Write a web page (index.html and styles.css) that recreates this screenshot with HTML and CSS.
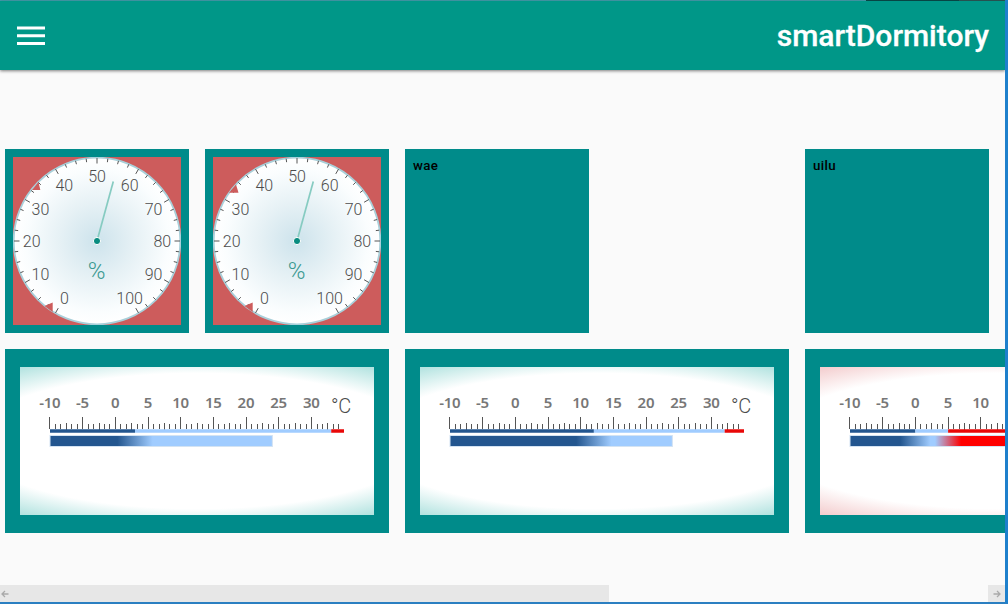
FILE: index.html
```html
<!DOCTYPE html>
<html lang="en">
<head>
<meta charset="utf-8">
<title>smartDormitory</title>
<link rel="stylesheet" href="styles.css">
</head>
<body>
<div class="window">
  <div class="window-top"><i class="top-a"></i><i class="top-b"></i><i class="top-c"></i></div>
  <header class="toolbar">
    <svg class="menu" width="28" height="20" viewBox="0 0 28 20"><path d="M0 2h28M0 9.700h28M0 17.500h28" stroke="#fff" stroke-width="3"/></svg>
    <h1 class="title">smartDormitory</h1>
  </header>
  <main class="board">
    <section class="tile"><svg class="dial" data-marker="19 33 27.3 33 25.5 25" viewBox="0 0 168 168"></svg></section>
    <section class="tile"><svg class="dial" data-marker="16 35.7 25.5 35.7 23 27.5" viewBox="0 0 168 168"></svg></section>
    <section class="tile label">wae</section>
    <section class="tile label last">uilu</section>
    <section class="tile wide"><svg class="thermo cool" data-low="3" data-high="33" data-value="24" viewBox="0 0 354 148"></svg></section>
    <section class="tile wide"><svg class="thermo cool" data-low="12" data-high="32" data-value="24" viewBox="0 0 354 148"></svg></section>
    <section class="tile wide"><svg class="thermo warm" data-low="0" data-high="5" data-value="24" data-visible="10" viewBox="0 0 354 148"></svg></section>
  </main>
  <div class="scrollbar">
    <div class="thumb"><svg width="10" height="10" viewBox="0 0 10 10"><path d="M8.500 5H2M5 2 2 5l3 3"/></svg></div>
    <div class="arrow"><svg width="10" height="10" viewBox="0 0 10 10"><path d="M1.500 5H8M5 2l3 3-3 3"/></svg></div>
  </div>
</div>
<script src="gauges.js"></script>
</body>
</html>
```
FILE: styles.css
```css
* { box-sizing: border-box; }
body { margin: 0; background: #fafafa; font-family: Roboto, sans-serif; overflow: hidden; }
.window { width: 1008px; height: 604px; display: flex; flex-direction: column; overflow: hidden; border-right: 3px solid #1e80cc; border-bottom: 2px solid #2b7fc1; }
.window-top { display: flex; height: 1px; flex: none; }
.top-a { width: 866px; background: #459fae; }
.top-b { width: 93px; background: #084c4b; }
.top-c { flex: 1; background: #2a5957; }
.toolbar { flex: none; height: 69px; padding: 0 16px 0 17px; display: flex; align-items: center; justify-content: space-between; background: #009788; box-shadow: 0 1px 3px rgba(0,0,0,.5); }
.title { margin: 0; font-size: 30px; line-height: 36px; font-weight: 500; color: #fff; -webkit-text-stroke: .3px #fff; }
.board { flex: 1; display: grid; grid-template-columns: repeat(6, 184px); grid-auto-rows: 184px; gap: 16px; padding: 79px 0 0 5px; overflow: hidden; }
.tile { background: #008b8a; padding: 8px; }
.wide { grid-column: span 2; padding: 18px 15px; }
.label { font-size: 13.300px; line-height: 17px; font-weight: 500; letter-spacing: .35px; color: #000; }
.last { grid-column: 5; }
.dial { display: block; width: 168px; height: 168px; background: #cd5c5c; }
.dial text { font-size: 16px; font-weight: 300; fill: #4c4c4c; text-anchor: middle; }
.dial .unit { font-size: 24px; fill: #3a9990; }
.thermo { display: block; width: 354px; height: 148px; }
.cool { background: radial-gradient(ellipse 305px 91px at center, #fff 74.500%, #b0e2df 100%); }
.warm { background: radial-gradient(ellipse 305px 91px at center, #fff 74.500%, #f3cccd 100%); }
.thermo text { font: 600 15px "Noto Sans", sans-serif; fill: #777; text-anchor: middle; letter-spacing: -.3px; }
.thermo .unit { font: 300 20px Roboto, sans-serif; fill: #4a4a4a; letter-spacing: -.3px; }
.scrollbar { flex: none; height: 17px; display: flex; justify-content: space-between; }
.scrollbar svg { fill: none; stroke: #aaa; stroke-width: 1.300; }
.thumb { width: 609px; background: #e7e7e7; display: flex; align-items: center; }
.arrow { width: 17px; background: #e7e7e7; display: flex; align-items: center; justify-content: center; }
```
FILE: gauges.js
```js
const DEG = Math.PI / 180;

document.querySelectorAll('.dial').forEach((svg, n) => {
  let s = `<defs><radialGradient id="face${n}"><stop offset="0" stop-color="#cde3ec"/><stop offset=".45" stop-color="#e6f1f5"/><stop offset=".85" stop-color="#fafdfe"/><stop offset="1" stop-color="#fff"/></radialGradient></defs>
    <circle cx="84" cy="84" r="83.300" fill="url(#face${n})" stroke="#a9d0da" stroke-width="1.800"/>`;
  for (let i = 0; i <= 40; i++) {
    const a = (-150 + i * 7.5) * DEG, x = Math.sin(a), y = -Math.cos(a);
    const major = i % 4 === 0, r1 = major ? 77.5 : 79.5, r2 = 83;
    s += `<path d="M${84 + x * r1} ${84 + y * r1}L${84 + x * r2} ${84 + y * r2}" stroke="#555" stroke-width="1"/>`;
    if (major) s += `<text x="${84 + x * 65.3}" y="${90.2 + y * 65.2}">${i * 2.5}</text>`;
  }
  s += `<polygon points="${svg.dataset.marker}" fill="#cd5c5c"/><polygon points="31.500 149 39.700 145.500 39.700 155" fill="#cd5c5c"/>
    <path d="M84 84 100.300 24.500" stroke="#86cbc1" stroke-width="1.700"/>
    <circle cx="84" cy="84" r="3.600" fill="#098c80" stroke="#fff"/>
    <text class="unit" x="83.500" y="122.300">%</text>`;
  svg.innerHTML = s;
});

document.querySelectorAll('.thermo').forEach((svg, n) => {
  const low = +svg.dataset.low, high = +svg.dataset.high, value = +svg.dataset.value;
  const visible = +(svg.dataset.visible || 35);
  const pos = v => 30 + (v + 10) * 6.54;
  const width = pos(value) - 30;
  const at = v => (pos(v) - 30) / width;
  const dark = '#23568f', light = '#a0ccff', red = '#f00';
  const stops = high < value
    ? [[low - 2.3, dark], [low + 2.3, light], [high - 2, light], [high + 2, red]]
    : [[low - 2.7, dark], [low + 2.7, light]];
  let s = `<defs><linearGradient id="bar${n}">${stops.map(p => `<stop offset="${at(p[0])}" stop-color="${p[1]}"/>`).join('')}</linearGradient></defs>`;
  for (let i = 0; i < 54; i++) {
    const v = -10 + i * 5 / 6;
    const x = Math.floor(pos(v)) - (i === 0 ? 1 : 0) + .5;
    const top = i % 6 === 0 ? 50 : i % 6 === 3 ? 56 : 57;
    s += `<path d="M${x} ${top}V${i % 6 === 3 ? 63 : 62}" stroke="#555"/>`;
    if (i % 6 === 0 && v < visible + .1) s += `<text x="${pos(v) - .3}" y="41">${Math.round(v)}</text>`;
  }
  s += `<path d="M30 64H${pos(low)}" stroke="${dark}" stroke-width="3.500"/>
    <path d="M${pos(low)} 64H${pos(high)}" stroke="${light}" stroke-width="3.500"/>
    <path d="M${pos(high)} 64H324" stroke="#e80808" stroke-width="3.500"/>
    <rect x="30" y="68.500" width="${width}" height="11" fill="url(#bar${n})" stroke="#d3e3f3"/>`;
  if (visible === 35) s += `<text class="unit" x="321" y="46">°C</text>`;
  svg.innerHTML = s;
});
```
